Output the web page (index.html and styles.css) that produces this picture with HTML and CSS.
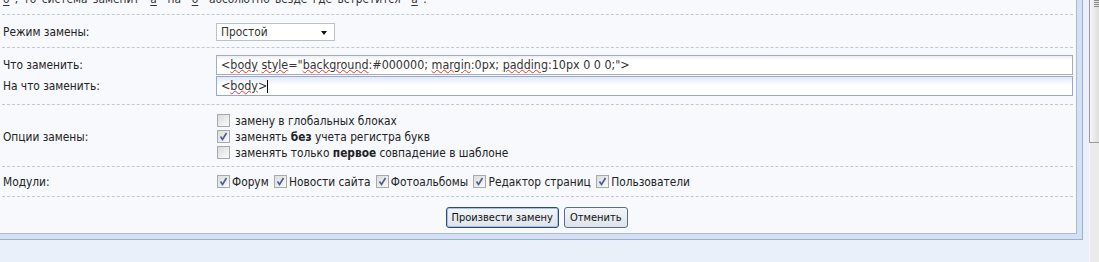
FILE: index.html
```html
<!DOCTYPE html>
<html lang="ru">
<head>
  <meta charset="UTF-8" />
  <title>Замена в шаблонах</title>
  <link rel="stylesheet" href="styles.css">
</head>
<body>
  <div class="page">
    <div class="frame">
      <div class="panel">

        <div class="row row-note">
          <u>о</u> , то система заменит &nbsp;<u>а</u>&nbsp; на &nbsp;<u>о</u>&nbsp; абсолютно везде где встретится &nbsp;<u>а</u> .
        </div>

        <div class="row row-mode">
          <div class="label">Режим замены:</div>
          <div class="field">
            <div class="select">
              <span>Простой</span>
              <span class="arrow"></span>
            </div>
          </div>
        </div>

        <div class="row row-inputs">
          <div class="pair">
            <div class="label">Что заменить:</div>
            <div class="field">
              <div class="input">&lt;<span class="typo">body</span> <span class="typo">style</span>="<span class="typo">background</span>:#000000; <span class="typo">margin</span>:0px; <span class="typo">padding</span>:10px 0 0 0;"&gt;</div>
            </div>
          </div>
          <div class="pair">
            <div class="label">На что заменить:</div>
            <div class="field">
              <div class="input focused">&lt;<span class="typo">body</span>&gt;<span class="caret"></span></div>
            </div>
          </div>
        </div>

        <div class="row row-options">
          <div class="label">Опции замены:</div>
          <div class="field">
            <div class="opt"><span class="cb"></span>замену в глобальных блоках</div>
            <div class="opt"><span class="cb"><svg viewBox="0 0 11 11"><path d="M2.5 5.5 L4.5 8.5 L8.5 2" /></svg></span>заменять <b>без</b> учета регистра букв</div>
            <div class="opt"><span class="cb"></span>заменять только <b>первое</b> совпадение в шаблоне</div>
          </div>
        </div>

        <div class="row row-modules">
          <div class="label">Модули:</div>
          <div class="field modules">
            <span class="mod"><span class="cb"><svg viewBox="0 0 11 11"><path d="M2.5 5.5 L4.5 8.5 L8.5 2" /></svg></span>Форум</span>
            <span class="mod"><span class="cb"><svg viewBox="0 0 11 11"><path d="M2.5 5.5 L4.5 8.5 L8.5 2" /></svg></span>Новости сайта</span>
            <span class="mod"><span class="cb"><svg viewBox="0 0 11 11"><path d="M2.5 5.5 L4.5 8.5 L8.5 2" /></svg></span>Фотоальбомы</span>
            <span class="mod"><span class="cb"><svg viewBox="0 0 11 11"><path d="M2.5 5.5 L4.5 8.5 L8.5 2" /></svg></span>Редактор страниц</span>
            <span class="mod"><span class="cb"><svg viewBox="0 0 11 11"><path d="M2.5 5.5 L4.5 8.5 L8.5 2" /></svg></span>Пользователи</span>
          </div>
        </div>

        <div class="row row-buttons">
          <button class="btn default">Произвести замену</button>
          <button class="btn">Отменить</button>
        </div>

      </div>
    </div>
  </div>

  <div class="scrollbar">
    <div class="thumb"></div>
    <div class="track"></div>
  </div>
</body>
</html>
```

FILE: styles.css
```css
html, body {
  height: 100%;
}
body {
  margin: 0;
  display: flex;
  background-color: #eaf0fa;
  color: #222;
  font-family: 'DejaVu Sans Condensed', 'DejaVu Sans', sans-serif;
  font-size: 11.8px;
  overflow: hidden;
}
.page {
  flex: 1;
  min-width: 0;
}
.frame {
  margin: -20px 6px 0 -20px;
  border: 1px solid #9dafc9;
  background: #d3e1f5;
  padding: 5px;
}
.panel {
  background: #f7f9fd;
  border: 1px solid #a9bbd6;
  padding-right: 3px;
}
.row {
  display: flex;
  align-items: center;
  border-bottom: 1px dashed #c3c8d0;
}
.row:last-child {
  border-bottom: none;
}
.label {
  width: 213px;
  flex: none;
  padding-left: 16px;
}
.field {
  flex: 1;
  min-width: 0;
}
.row-note {
  display: block;
  padding: 4px 0 7px 16px;
  line-height: 16px;
  word-spacing: 2px;
  color: #333;
}
.row-note u {
  text-underline-offset: 2px;
}
.row-mode {
  padding: 8px 0 6px;
}
.select {
  height: 16px;
  width: 106px;
  border: 1px solid #b9c1cc;
  background: #fff;
  display: flex;
  align-items: center;
  justify-content: space-between;
  padding: 0 7px 0 4px;
  color: #333;
}
.arrow {
  border-left: 3px solid transparent;
  border-right: 3px solid transparent;
  border-top: 4px solid #111;
  margin-top: 1px;
}
.row-inputs {
  display: block;
  padding: 7px 0 8px;
}
.pair {
  display: flex;
  align-items: center;
}
.pair + .pair {
  margin-top: 1px;
}
.input {
  height: 18px;
  line-height: 17px;
  font-size: 12.4px;
  border: 1px solid #a7adb6;
  background: linear-gradient(#eceef1, #fff 4px);
  padding: 0 4px;
  color: #333;
  white-space: nowrap;
  overflow: hidden;
}
.input.focused {
  border-color: #93aad0;
  background: linear-gradient(#e2e8f8, #fff 8px);
}
.typo {
  text-decoration: underline wavy #e33;
  text-decoration-thickness: 1px;
  text-underline-offset: 0;
}
.caret {
  display: inline-block;
  width: 1px;
  height: 13px;
  background: #000;
  vertical-align: -3px;
}
.row-options {
  padding: 8px 0 5px;
}
.opt {
  height: 16px;
  line-height: 16px;
  white-space: nowrap;
}
.cb {
  display: inline-block;
  box-sizing: border-box;
  width: 13px;
  height: 13px;
  border: 1px solid #a7a9ad;
  background: linear-gradient(135deg, #dcdcdc, #fafafa);
  margin: 0 5px 0 1px;
  vertical-align: -2px;
}
.cb svg {
  display: block;
  width: 11px;
  height: 11px;
}
.cb path {
  fill: none;
  stroke: #4a5f8c;
  stroke-width: 1.6;
}
.row-modules {
  padding: 7px 0 6px;
}
.modules {
  height: 16px;
  line-height: 16px;
  white-space: nowrap;
}
.mod {
  margin-right: 1px;
}
.mod .cb {
  margin-right: 2px;
}
.row-buttons {
  justify-content: center;
  padding: 10px 0 5px 13px;
  gap: 5px;
}
.btn {
  font-family: inherit;
  font-size: 11px;
  color: #111;
  height: 21px;
  padding: 0 5px;
  border: 1px solid #5a6e88;
  border-radius: 3px;
  background: linear-gradient(#f4f6f9, #dde3ea);
}
.btn.default {
  border-color: #2b4a78;
  box-shadow: inset 0 0 0 1px #aac0e0;
}
.scrollbar {
  width: 10px;
  flex: none;
  display: flex;
  flex-direction: column;
}
.thumb {
  height: 142px;
  border: 1px solid #9a9a9a;
  border-right: none;
  border-top: none;
  background:
    repeating-linear-gradient(#8a8a8a 0 1px, transparent 1px 2px) 4px 0 / 6px 7px no-repeat,
    linear-gradient(90deg, #f6f6f6, #dedede);
}
.track {
  flex: 1;
  background: #ebebeb;
  border-left: 1px solid #f6f6f6;
}
```
